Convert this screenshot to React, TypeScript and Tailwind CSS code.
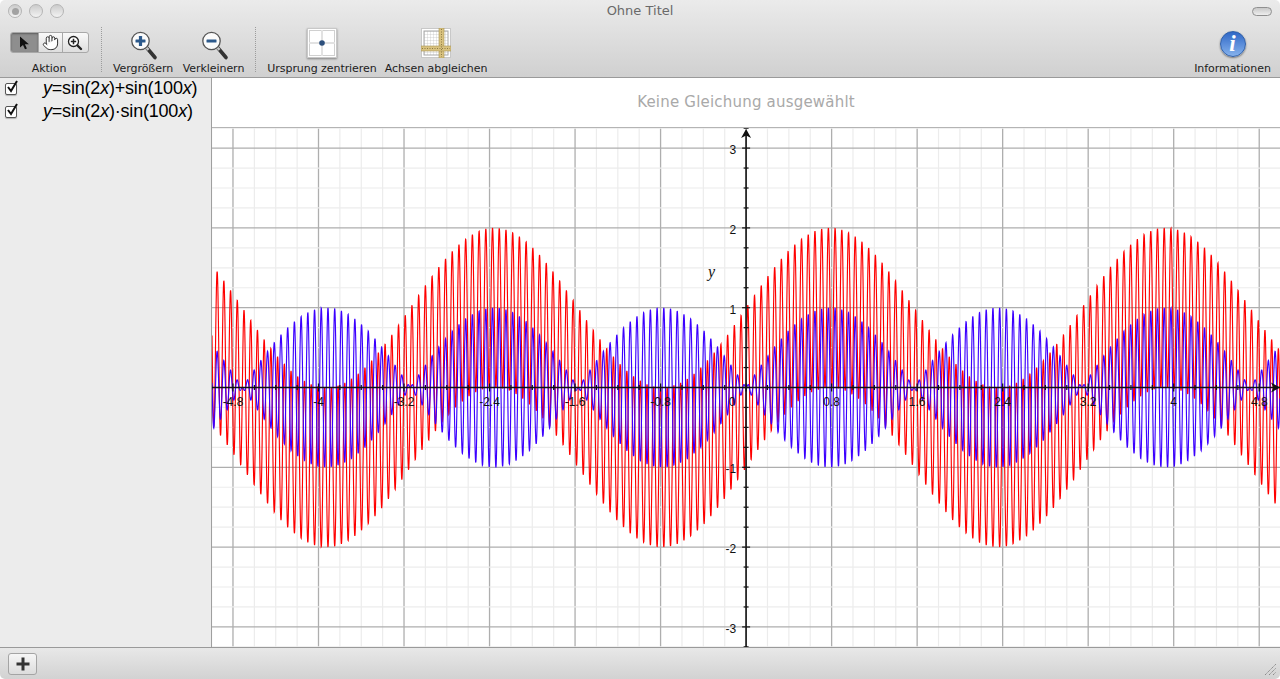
import { Hand } from "lucide-react";

const W = 1068;
const H = 519;
// plot origin and scale, in svg coordinates (svg starts at 212,128)
const OX = 534.1;
const OY = 259.5;
const SX = 106.9;
const SY = 79.8;

const xLabels = ["-4.8", "-4", "-3.2", "-2.4", "-1.6", "-0.8", "0.8", "1.6", "2.4", "3.2", "4", "4.8"];
const yLabels = ["3", "2", "1", "-1", "-2", "-3"];

function curve(fn: (x: number) => number) {
  let d = "";
  for (let px = 0; px <= W; px += 0.2) {
    const y = OY - fn((px - OX) / SX) * SY;
    d += `${d ? "L" : "M"}${px.toFixed(1)} ${y.toFixed(2)}`;
  }
  return d;
}

function range(from: number, to: number) {
  const out: number[] = [];
  for (let i = from; i <= to; i++) out.push(i);
  return out;
}

function Graph() {
  const vert = range(-25, 25);
  const horiz = range(-14, 14);
  return (
    <svg width={W} height={H} viewBox={`0 0 ${W} ${H}`} className="block">
      {vert.map((i) => (
        <line
          key={i}
          x1={OX + (i * SX) / 5}
          x2={OX + (i * SX) / 5}
          y1={0}
          y2={H}
          stroke={i % 4 === 0 ? "#aeaeae" : "#ececec"}
          strokeWidth={i % 4 === 0 ? 1.3 : 1.2}
        />
      ))}
      {horiz.map((i) => (
        <line
          key={i}
          x1={0}
          x2={W}
          y1={OY + (i * SY) / 4}
          y2={OY + (i * SY) / 4}
          stroke={i % 4 === 0 ? "#aeaeae" : "#ececec"}
          strokeWidth={1.2}
        />
      ))}
      <path d={curve((x) => Math.sin(2 * x) + Math.sin(100 * x))} fill="none" stroke="#ff0000" strokeWidth={1.15} />
      <path d={curve((x) => Math.sin(2 * x) * Math.sin(100 * x))} fill="none" stroke="#3c00ff" strokeWidth={1.15} />

      <line x1={0} x2={W} y1={OY} y2={OY} stroke="#111" strokeWidth={1.4} />
      <line x1={OX} x2={OX} y1={4} y2={H} stroke="#2a2a2a" strokeWidth={1.8} />
      {vert.map((i) => (
        <line
          key={i}
          x1={OX + (i * SX) / 5}
          x2={OX + (i * SX) / 5}
          y1={OY - (i % 4 === 0 ? 4 : 2.5)}
          y2={OY + (i % 4 === 0 ? 4 : 2.5)}
          stroke="#111"
          strokeWidth={1.2}
        />
      ))}
      {horiz.map((i) => (
        <line
          key={i}
          x1={OX - (i % 4 === 0 ? 4 : 2.5)}
          x2={OX + (i % 4 === 0 ? 4 : 2.5)}
          y1={OY + (i * SY) / 4}
          y2={OY + (i * SY) / 4}
          stroke="#111"
          strokeWidth={1.2}
        />
      ))}
      <path d={`M${OX} 1L${OX + 5} 10L${OX} 7.5L${OX - 5} 10Z`} fill="#111" />
      <path d={`M${W} ${OY}L${W - 9} ${OY - 5}L${W - 6.5} ${OY}L${W - 9} ${OY + 5}Z`} fill="#111" />

      <g fontFamily='"Liberation Sans", sans-serif' fontSize={12} fill="#111">
        {xLabels.map((l) => (
          <text key={l} x={OX + Number(l) * SX} y={OY + 18} textAnchor="middle">
            {l}
          </text>
        ))}
        <text x={OX - 14} y={OY + 18} textAnchor="middle">
          0
        </text>
        {yLabels.map((l) => (
          <text key={l} x={OX - 10} y={OY - Number(l) * SY + 6} textAnchor="end">
            {l}
          </text>
        ))}
      </g>
      <text
        x={OX - 38}
        y={149}
        fontFamily='"Liberation Serif", serif'
        fontStyle="italic"
        fontSize={16}
        fill="#111"
      >
        y
      </text>
    </svg>
  );
}

function Magnifier({ plus }: { plus?: boolean }) {
  return (
    <svg width="32" height="34" viewBox="0 0 32 34">
      <line x1="20" y1="21" x2="28" y2="30.5" stroke="#333" strokeWidth="3.6" strokeLinecap="round" />
      <line x1="19" y1="20" x2="21.5" y2="22.8" stroke="#c4c4c4" strokeWidth="2.6" />
      <circle cx="13.5" cy="14" r="8.7" fill="#fbfbfb" stroke="#555" strokeWidth="1.3" />
      <rect x="8.5" y="12.4" width="10" height="3.2" rx="0.5" fill="#2d5a8c" />
      {plus ? <rect x="11.9" y="9" width="3.2" height="10" rx="0.5" fill="#2d5a8c" /> : null}
    </svg>
  );
}

function Tool({ label, width, children }: { label: string; width: string; children: React.ReactNode }) {
  return (
    <div className={`flex flex-col items-center ${width}`}>
      <div className="flex h-[34px] items-center justify-center">{children}</div>
      <div className="mt-[1px] text-[11px] leading-[14px] tracking-[-0.06px] whitespace-nowrap text-[#1c1c1c]">{label}</div>
    </div>
  );
}

function Dots({ right = 11 }: { right?: number }) {
  return (
    <div
      className="ml-[11px] h-[45px] w-px border-l border-dotted border-[#9c9c9c]"
      style={{ marginRight: right }}
    />
  );
}

function Light({ active }: { active?: boolean }) {
  return (
    <div className="flex h-[14px] w-[14px] items-center justify-center rounded-full border border-[#b4b4b4] bg-linear-to-b from-[#cbcbcb] to-[#f3f3f3]">
      {active ? <div className="h-[7px] w-[7px] rounded-full bg-[#a2a2a2]" /> : null}
    </div>
  );
}

function Row({ children }: { children: React.ReactNode }) {
  return (
    <div className="flex h-[23px] items-center">
      <div className="ml-[5px] flex h-[12px] w-[12px] items-center justify-center rounded-[2px] border border-[#555] bg-white shadow-[0_1px_1px_rgba(0,0,0,0.25)]">
        <svg width="14" height="14" viewBox="0 0 14 14" className="mt-[-3px] ml-[1px] shrink-0">
          <path d="M3 7l3 4l6-10" fill="none" stroke="#111" strokeWidth="2" />
        </svg>
      </div>
      <div className="ml-[26px] text-[18px] leading-[23px] tracking-[-0.2px] whitespace-nowrap text-black">{children}</div>
    </div>
  );
}

export default function App() {
  return (
    <div
      className="flex h-[679px] w-[1280px] flex-col overflow-hidden rounded-[5px] bg-white"
      style={{ fontFamily: '"DejaVu Sans", sans-serif' }}
    >
      <header className="h-[78px] shrink-0 border-b border-[#9a9a9a] bg-linear-to-b from-[#ebebeb] to-[#d0d0d0]">
        <div className="grid h-[22px] grid-cols-3 items-center px-[8px]">
          <div className="flex gap-[7px]">
            <Light active />
            <Light />
            <Light />
          </div>
          <div className="text-center text-[13px] text-[#6a6a6a]">Ohne Titel</div>
          <div className="flex justify-end">
            <div className="h-[9px] w-[20px] rounded-full border border-[#8f8f8f] bg-linear-to-b from-[#c8c8c8] to-[#eeeeee]" />
          </div>
        </div>
        <div className="mt-[5px] flex items-start pl-[8px]">
          <Tool label="Aktion" width="w-[82px]">
            <div className="mt-[-3px] flex h-[21px] w-[79px] overflow-hidden rounded-[3px] border border-[#a8a8a8] bg-linear-to-b from-[#fafafa] to-[#dedede]">
              <div className="flex w-[27px] items-center justify-center bg-[#8e8e8e] shadow-[inset_0_1px_2px_rgba(0,0,0,0.35)]">
                <svg width="12" height="14" viewBox="0 0 12 14">
                  <path d="M2 0.5v11l3-2.6l2 4.4l1.9-.9l-2-4.2h4z" fill="#111" />
                </svg>
              </div>
              <div className="flex w-[25px] items-center justify-center border-x border-[#a8a8a8]">
                <Hand size={17} strokeWidth={1.3} color="#222" fill="#fff" />
              </div>
              <div className="flex flex-1 items-center justify-center">
                <svg width="16" height="16" viewBox="0 0 16 16">
                  <line x1="9.5" y1="9.5" x2="14" y2="14" stroke="#222" strokeWidth="2.4" strokeLinecap="round" />
                  <circle cx="6.5" cy="6.5" r="5" fill="#fff" stroke="#222" strokeWidth="1.3" />
                  <path d="M3.8 6.5h5.4M6.5 3.8v5.4" stroke="#222" strokeWidth="1.5" />
                </svg>
              </div>
            </div>
          </Tool>
          <Dots />
          <Tool label="Vergrößern" width="w-[60px]">
            <Magnifier plus />
          </Tool>
          <div className="w-[10px]" />
          <Tool label="Verkleinern" width="w-[61px]">
            <Magnifier />
          </Tool>
          <Dots right={12} />
          <Tool label="Ursprung zentrieren" width="w-[108px]">
            <div className="mt-[-2px] flex h-[30px] w-[30px] items-center justify-center border border-[#c8c8c8] bg-white shadow-[0_1px_2px_rgba(0,0,0,0.4)]">
              <svg width="26" height="26" viewBox="0 0 26 26">
                <rect x="0.5" y="0.5" width="25" height="25" fill="#fff" stroke="#d0d0d0" />
                <path d="M13 0v26M0 13h26" stroke="#e2e2e2" strokeWidth="2" />
                <circle cx="13" cy="13" r="2.8" fill="#2c4f7c" />
              </svg>
            </div>
          </Tool>
          <div className="w-[10px]" />
          <Tool label="Achsen abgleichen" width="w-[100px]">
            <svg width="30" height="30" viewBox="0 0 30 30" className="mt-[-2px]">
              <defs>
                <pattern id="gridCell" width="3" height="3" patternUnits="userSpaceOnUse">
                  <path d="M3 0H0V3" fill="none" stroke="#b5b5b5" strokeWidth="0.6" />
                </pattern>
              </defs>
              <rect x="0.5" y="0.5" width="29" height="29" fill="#fff" stroke="#c8c8c8" />
              <rect x="3" y="3" width="24" height="24" fill="url(#gridCell)" stroke="#a8a8a8" />
              <rect x="18" y="0" width="5" height="30" fill="#d9c27f" stroke="#a89555" strokeWidth="0.6" />
              <rect x="0" y="18" width="30" height="5" fill="#d9c27f" stroke="#a89555" strokeWidth="0.6" />
              <path d="M1 20.5h28M20.5 1v28" stroke="#8d7b45" strokeWidth="1" strokeDasharray="1 1.5" />
            </svg>
          </Tool>
          <div className="ml-auto pr-[10px]">
            <Tool label="Informationen" width="w-[75px]">
              <div className="flex h-[26px] w-[26px] items-center justify-center rounded-full border border-[#2f5fa8] bg-linear-to-b from-[#2f67c6] to-[#86b2ec] shadow-[0_1px_2px_rgba(0,0,0,0.45)]">
                <span
                  className="text-[23px] leading-[26px] font-bold text-white italic"
                  style={{ fontFamily: '"Liberation Serif", serif' }}
                >
                  i
                </span>
              </div>
            </Tool>
          </div>
        </div>
      </header>

      <main className="flex min-h-0 flex-1">
        <aside
          className="w-[212px] shrink-0 border-r border-[#9f9f9f] bg-[#ececec]"
          style={{ fontFamily: '"Liberation Sans", sans-serif' }}
        >
          <div className="mt-[-1px]">
            <Row>
              <i>y</i>=sin(2<i>x</i>)+sin(100<i>x</i>)
            </Row>
            <Row>
              <i>y</i>=sin(2<i>x</i>)·sin(100<i>x</i>)
            </Row>
          </div>
        </aside>
        <section className="flex min-w-0 flex-1 flex-col">
          <div className="flex h-[50px] shrink-0 items-center justify-center border-b border-[#b4b4b4] bg-white text-[15px] tracking-[0.2px] text-[#a9a9a9]">
            Keine Gleichung ausgewählt
          </div>
          <div className="min-h-0 flex-1 overflow-hidden">
            <Graph />
          </div>
        </section>
      </main>

      <footer className="flex h-[32px] shrink-0 items-center justify-between border-t border-[#9a9a9a] bg-linear-to-b from-[#e8e8e8] to-[#d2d2d2] pl-[8px]">
        <button className="flex h-[22px] w-[29px] items-center justify-center rounded-[3px] border border-[#a4a4a4] bg-linear-to-b from-[#f6f6f6] to-[#dcdcdc]">
          <svg width="14" height="14" viewBox="0 0 14 14">
            <path d="M7 0.5v13M0.5 7h13" stroke="#333" strokeWidth="3" />
          </svg>
        </button>
        <svg width="14" height="14" viewBox="0 0 14 14" className="mt-[10px] mr-[2px]">
          <path d="M1 13L12 2M5 13l7-7M9 13l3-3" stroke="#8a8a8a" strokeWidth="1" strokeDasharray="1.4 0.6" />
        </svg>
      </footer>
    </div>
  );
}
